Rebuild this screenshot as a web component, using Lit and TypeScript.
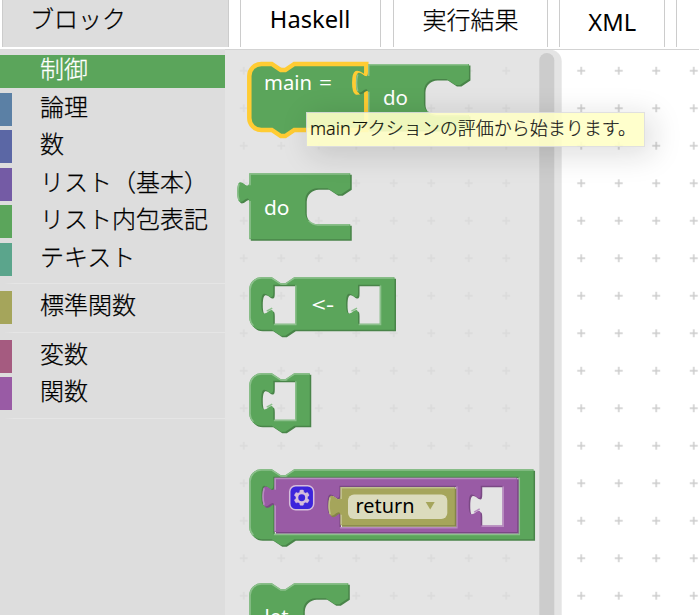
import { LitElement, html, css, svg } from "lit";
import { customElement } from "lit/decorators.js";
import { classMap } from "lit/directives/class-map.js";

interface Palette { main: string; dark: string; light: string; }
const GREEN: Palette = { main: "#5ba55b", dark: "#498449", light: "#8cc08c" };
const PURPLE: Palette = { main: "#995ba5", dark: "#7a4984", light: "#b88cc0" };
const OLIVE: Palette = { main: "#a5a55b", dark: "#848449", light: "#c0c08c" };

const CATEGORIES: (null | { name: string; color: string; selected?: boolean })[] = [
  { name: "制御", color: "#5ba55b", selected: true },
  { name: "論理", color: "#5b80a5" },
  { name: "数", color: "#5b67a5" },
  { name: "リスト（基本）", color: "#745ba5" },
  { name: "リスト内包表記", color: "#5ba55b" },
  { name: "テキスト", color: "#5ba58c" },
  null,
  { name: "標準関数", color: "#a5a55b" },
  null,
  { name: "変数", color: "#a55b80" },
  { name: "関数", color: "#995ba5" },
  null,
];

const TAB_DOWN = "c 0,10 -8,-8 -8,7.5 s 8,-2.5 8,7.5";
const TAB_UP = "c 0,-10 -8,8 -8,-7.5 s 8,2.5 8,-7.5";

interface Hole { x: number; y: number; w: number; h: number; }

const holePath = (o: Hole) =>
  `M ${o.x + o.w},${o.y} H ${o.x} v 5 ${TAB_DOWN} V ${o.y + o.h} h ${o.w} z`;
const holeLight = (o: Hole) =>
  `M ${o.x + o.w + 0.5},${o.y + 0.5} v ${o.h} h ${-o.w} M ${o.x - 4.4},${o.y + 17.6} l 3.7,-2.1`;

const mouthPath = (w: number) =>
  `v 10 l -6,4 -3,0 -6,-4 H ${w - 22} a 8,8 0 0,0 -8,8 v 8 a 8,8 0 0,0 8,8 H ${w}`;
const mouthLight = (w: number) =>
  `M ${w - 27.7},31.7 a 8.5,8.5 0 0,0 6,2.8 H ${w - 0.5}`;

const statementPath = (w: number, h: number, right = "", holes: Hole[] = []) =>
  `M 0,8 A 8,8 0 0,1 8,0 H 15 l 6,4 3,0 6,-4 H ${w} ${right} V ${h} H 30 l -6,4 -3,0 -6,-4 H 8 a 8,8 0 0,1 -8,-8 z ${holes.map(holePath).join(" ")}`;
const statementLight = (w: number, h: number) =>
  `M 2.7,${h - 2.7} A 7.5,7.5 0 0,1 0.5,${h - 8} V 8 A 7.5,7.5 0 0,1 8,0.5 H 15 l 6,4 3,0 6,-4 H ${w - 0.5}`;

const valuePath = (w: number, h: number, right = "", holes: Hole[] = []) =>
  `M 0,0 H ${w} ${right} V ${h} H 0 V 20 ${TAB_UP} z ${holes.map(holePath).join(" ")}`;
const valueLight = (w: number, h: number) =>
  `M 0.5,${h - 0.5} V 18.5 m -7.36,-0.5 q -1.52,-5.5 0,-11 m 7.36,1 V 0.5 H ${w - 0.5}`;

const block = (x: number, y: number, c: Palette, body: string, light: string) => svg`
  <g transform="translate(${x} ${y}) scale(1.5)">
    <path transform="translate(1 1)" fill-rule="evenodd" fill=${c.dark} d=${body}></path>
    <path fill-rule="evenodd" fill=${c.main} d=${body}></path>
    <path class="light" stroke=${c.light} d=${light}></path>
  </g>`;

const label = (x: number, y: number, w: number, text: string, cls = "label") =>
  svg`<text class=${cls} x=${x} y=${y} textLength=${w} lengthAdjust="spacingAndGlyphs">${text}</text>`;

@customElement("block-toolbox")
class BlockToolbox extends LitElement {
  static styles = css`
    :host { display: block; width: 225px; flex: none; box-sizing: border-box; padding-top: 6px; background: #ddd; }
    .row {
      box-sizing: border-box; height: 33px; margin-bottom: 4.5px; padding-left: 28px;
      border-left: 12px solid; font-size: 24px; line-height: 26px; white-space: nowrap; color: #000;
    }
    .selected { color: #fff; }
    .sep { height: 1px; margin: 7.5px 0 7px; background: linear-gradient(90deg, transparent 4px, #e5e5e5 14px); }
  `;
  render() {
    return CATEGORIES.map((c) => c
      ? html`<div class=${classMap({ row: true, selected: !!c.selected })}
          style="border-color:${c.color};${c.selected ? `background:${c.color}` : ""}">${c.name}</div>`
      : html`<div class="sep"></div>`);
  }
}

@customElement("block-workspace")
class BlockWorkspace extends LitElement {
  static styles = css`
    :host { display: block; flex: 1; min-width: 0; }
    svg { display: block; width: 474px; height: 566px; }
    .light { fill: none; stroke-width: 1; }
    .selected { fill: #5ba55b; stroke: #fc3; stroke-width: 3; }
    text { font-family: "Noto Sans", "Open Sans", sans-serif; font-size: 20.5px; }
    .label { fill: #fff; }
    .field { fill: #000; }
  `;
  render() {
    const slot = (x: number): Hole => ({ x, y: 5, w: 14.5, h: 26 });
    const bind = [slot(16), slot(72.5)];
    const single = [slot(16)];
    const outer: Hole[] = [{ x: 16, y: 5, w: 163.5, h: 38 }];
    const inner: Hole[] = [{ x: 43.3, y: 5.3, w: 77.8, h: 27.5 }, { x: 137.5, y: 5.3, w: 14.5, h: 26.5 }];
    return html`<svg viewBox="225 49 474 566">
      <defs>
        <pattern id="grid" patternUnits="userSpaceOnUse" x="225" y="52" width="37.5" height="37.5">
          <path d="M 14.75,18.75 h 8 M 18.75,14.75 v 8" stroke="#ccc" stroke-width="1.5"></path>
        </pattern>
      </defs>
      <rect x="225" y="49" width="474" height="566" fill="#fff"></rect>
      <rect x="225" y="49" width="474" height="566" fill="url(#grid)"></rect>
      <path d="M 225,49.5 H 549.7 a 12,12 0 0,1 12,12 V 615 H 225 z" fill="#ddd" fill-opacity="0.8"></path>
      <rect x="539.3" y="53" width="15" height="590" rx="7.5" fill="#ccc"></rect>
      <rect x="225" y="49" width="474" height="1" fill="#d3d3d3"></rect>

      <g transform="translate(249.3 64) scale(1.5)">
        <path class="selected" d=${statementPath(78, 44, `v 5 ${TAB_DOWN}`)}></path>
      </g>
      ${block(368, 64, GREEN, valuePath(67.3, 44, mouthPath(67.3)), valueLight(67.3, 44) + mouthLight(67.3))}
      ${label(264, 90, 48, "main")}
      ${label(319, 90, 13, "=")}
      ${label(383, 105, 25, "do")}

      ${block(249.3, 173.3, GREEN, valuePath(67.3, 44, mouthPath(67.3)), valueLight(67.3, 44) + mouthLight(67.3))}
      ${label(264, 214.5, 25.5, "do")}

      ${block(249.3, 277.3, GREEN, statementPath(96.8, 35, "", bind), statementLight(96.8, 35) + bind.map(holeLight).join(""))}
      ${label(311.5, 312, 22.5, "<-")}

      ${block(249.3, 373.3, GREEN, statementPath(40.3, 35, "", single), statementLight(40.3, 35) + single.map(holeLight).join(""))}

      ${block(249.3, 469.3, GREEN, statementPath(189.5, 46.6, "", outer), statementLight(189.5, 46.6) + outer.map(holeLight).join(""))}
      ${block(274.5, 477.7, PURPLE, valuePath(161.8, 36.2, "", inner), valueLight(161.8, 36.2) + inner.map(holeLight).join(""))}
      <g transform="translate(289.7 485.7) scale(1.5)" opacity="0.6">
        <rect width="16" height="16" rx="4" fill="#00f" stroke="#fff"></rect>
        <path fill="#fff" stroke="#fff" stroke-width="0.3" d="m4.203,7.296 0,1.368 -0.92,0.677 -0.11,0.41 0.9,1.559 0.41,0.11 1.043,-0.457 1.187,0.683 0.127,1.134 0.3,0.3 1.8,0 0.3,-0.299 0.127,-1.138 1.185,-0.682 1.046,0.458 0.409,-0.11 0.9,-1.559 -0.11,-0.41 -0.92,-0.677 0,-1.366 0.92,-0.677 0.11,-0.41 -0.9,-1.559 -0.409,-0.109 -1.046,0.458 -1.185,-0.682 -0.127,-1.138 -0.3,-0.299 -1.8,0 -0.3,0.3 -0.126,1.135 -1.187,0.682 -1.043,-0.457 -0.41,0.11 -0.899,1.559 0.108,0.409z"></path>
        <circle cx="8" cy="8" r="2.3" fill="#00f"></circle>
      </g>
      ${block(340.5, 487, OLIVE, valuePath(76.2, 25.5), valueLight(76.2, 25.5))}
      <rect x="348" y="494.5" width="99.3" height="24.5" rx="6" fill="#dbdbbd"></rect>
      ${label(355.5, 512.8, 59, "return", "field")}
      <path d="M 425.7,502 h 9 l -4.5,7.6 z" fill="#a5a55b"></path>

      ${block(249.3, 583.3, GREEN, statementPath(66, 44, mouthPath(66)), statementLight(66, 44) + mouthLight(66))}
      ${label(264.5, 624, 24, "let")}
    </svg>`;
  }
}

@customElement("app-root")
class AppRoot extends LitElement {
  static styles = css`
    :host {
      display: flex; flex-direction: column; position: relative; width: 699px; height: 615px; overflow: hidden;
      background: #fff; font-family: "Noto Sans", "Noto Sans CJK JP", sans-serif; color: #000;
    }
    .tabs { display: flex; gap: 12px; height: 47px; margin-bottom: 2px; padding-left: 2px; flex: none; }
    .tab {
      box-sizing: border-box; flex: none; border: solid #ccc; border-width: 0 1px; height: 47px;
      font-size: 23px; line-height: 38px; white-space: nowrap; display: flex; justify-content: center;
    }
    .blocks { width: 227px; background: #ddd; justify-content: flex-start; padding-left: 27px; margin-right: -1px; line-height: 36px; }
    .haskell { width: 141px; }
    .result { width: 155px; line-height: 37px; }
    .xml { width: 106px; line-height: 45px; margin-left: -1px; }
    .latin { display: inline-block; transform: scaleX(1.03); }
    .more { width: 60px; margin-left: -1px; }
    .main { display: flex; flex: 1; min-height: 0; }
    block-toolbox, .jp { font-family: "Noto Sans CJK JP", sans-serif; font-weight: 300; -webkit-text-stroke: 0.25px currentColor; }
    .jp { font-size: 24px; }
    .tip {
      position: absolute; left: 306px; top: 112px; width: 339px; height: 35px; box-sizing: border-box;
      border: 1px solid #ddd; background: #ffffc7; opacity: 0.9; padding-left: 3px;
      box-shadow: 6px 6px 30px 1.5px rgba(0, 0, 0, 0.15);
      font-size: 18px; line-height: 31px; white-space: nowrap;
      font-family: "Noto Sans", "Noto Sans CJK JP", sans-serif; font-weight: 300; -webkit-text-stroke: 0.2px #000;
    }
  `;
  render() {
    return html`
      <nav class="tabs">
        <div class="tab blocks jp">ブロック</div>
        <div class="tab haskell"><span class="latin">Haskell</span></div>
        <div class="tab result jp">実行結果</div>
        <div class="tab xml"><span class="latin">XML</span></div>
        <div class="tab more"></div>
      </nav>
      <div class="main">
        <block-toolbox></block-toolbox>
        <block-workspace></block-workspace>
      </div>
      <div class="tip">mainアクションの評価から始まります。</div>`;
  }
}
